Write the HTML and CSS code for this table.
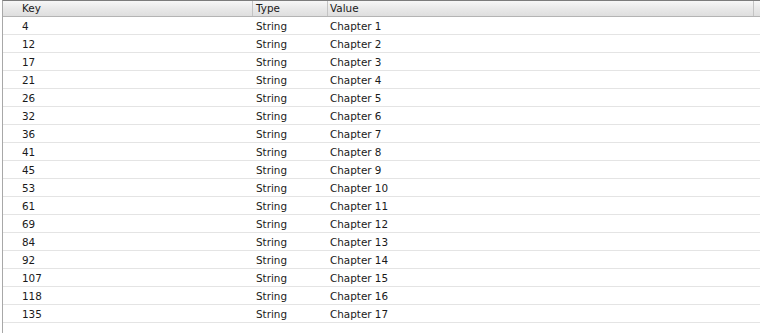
FILE: index.html
```html
<!DOCTYPE html>
<html>
<head>
<meta charset="utf-8">
<link rel="stylesheet" href="styles.css">
</head>
<body>
<div class="table">
  <div class="header">
    <div class="cell key">Key</div>
    <div class="cell type hdiv">Type</div>
    <div class="cell value hdiv">Value</div>
    <div class="cell tail hdiv"></div>
  </div>
  <div class="row"><div class="cell key">4</div><div class="cell type">String</div><div class="cell value">Chapter 1</div></div>
  <div class="row"><div class="cell key">12</div><div class="cell type">String</div><div class="cell value">Chapter 2</div></div>
  <div class="row"><div class="cell key">17</div><div class="cell type">String</div><div class="cell value">Chapter 3</div></div>
  <div class="row"><div class="cell key">21</div><div class="cell type">String</div><div class="cell value">Chapter 4</div></div>
  <div class="row"><div class="cell key">26</div><div class="cell type">String</div><div class="cell value">Chapter 5</div></div>
  <div class="row"><div class="cell key">32</div><div class="cell type">String</div><div class="cell value">Chapter 6</div></div>
  <div class="row"><div class="cell key">36</div><div class="cell type">String</div><div class="cell value">Chapter 7</div></div>
  <div class="row"><div class="cell key">41</div><div class="cell type">String</div><div class="cell value">Chapter 8</div></div>
  <div class="row"><div class="cell key">45</div><div class="cell type">String</div><div class="cell value">Chapter 9</div></div>
  <div class="row"><div class="cell key">53</div><div class="cell type">String</div><div class="cell value">Chapter 10</div></div>
  <div class="row"><div class="cell key">61</div><div class="cell type">String</div><div class="cell value">Chapter 11</div></div>
  <div class="row"><div class="cell key">69</div><div class="cell type">String</div><div class="cell value">Chapter 12</div></div>
  <div class="row"><div class="cell key">84</div><div class="cell type">String</div><div class="cell value">Chapter 13</div></div>
  <div class="row"><div class="cell key">92</div><div class="cell type">String</div><div class="cell value">Chapter 14</div></div>
  <div class="row"><div class="cell key">107</div><div class="cell type">String</div><div class="cell value">Chapter 15</div></div>
  <div class="row"><div class="cell key">118</div><div class="cell type">String</div><div class="cell value">Chapter 16</div></div>
  <div class="row"><div class="cell key">135</div><div class="cell type">String</div><div class="cell value">Chapter 17</div></div>
</div>
</body>
</html>
```
FILE: styles.css
```css
html, body {
  margin: 0;
  padding: 0;
  background: #ffffff;
}
body {
  width: 760px;
  height: 333px;
  overflow: hidden;
  font-family: "DejaVu Sans", "Liberation Sans", sans-serif;
  font-size: 10.4px;
  color: #1a1a1a;
}
.table {
  margin-left: 2px;
  height: 333px;
  border-left: 1px solid #a8a8a8;
  border-top: 1px solid #7c7c7c;
  box-sizing: border-box;
}
.header {
  display: flex;
  height: 15px;
  border-bottom: 1px solid #b4b4b4;
  background: linear-gradient(#f7f7f7, #e9e9e9 50%, #dedede);
  line-height: 15px;
}
.row {
  display: flex;
  height: 17px;
  line-height: 18px;
  border-bottom: 1px solid #e4e4e4;
}
.cell {
  box-sizing: border-box;
  white-space: nowrap;
}
.key {
  width: 249px;
  padding-left: 19px;
}
.type {
  width: 75px;
  padding-left: 3px;
}
.value {
  width: 426px;
  padding-left: 2px;
}
.tail {
  flex: 1;
}
.hdiv {
  border-left: 1px solid #c4c4c4;
}
.row .type, .row .value {
  border-left: 1px solid transparent;
}
```
